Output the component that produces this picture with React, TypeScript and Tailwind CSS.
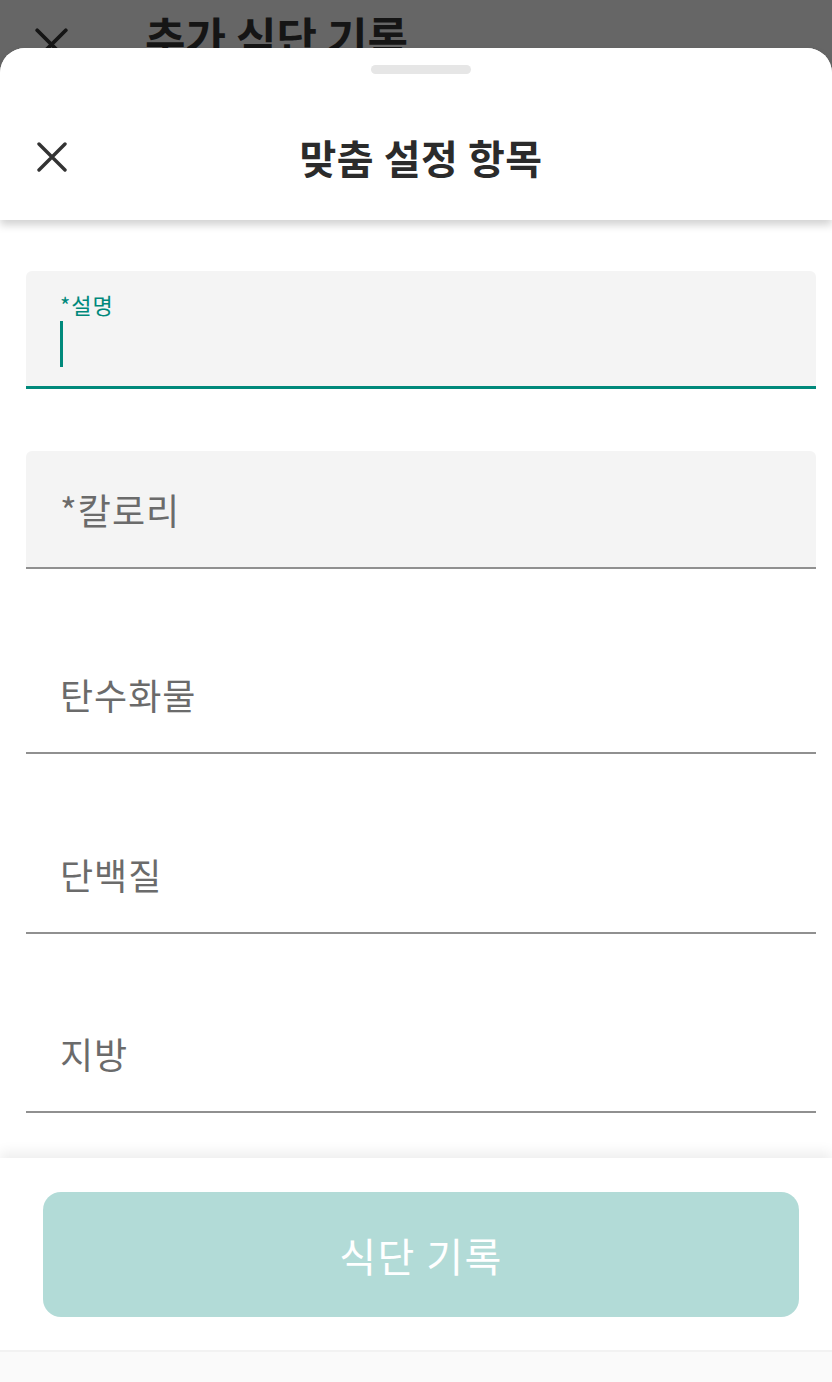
import React from "react";

function XIcon({ className }: { className?: string }) {
  return (
    <svg viewBox="0 0 30 30" className={className} fill="none">
      <path d="M2 2 L28 28 M28 2 L2 28" stroke="currentColor" strokeWidth="3.4" strokeLinecap="round" />
    </svg>
  );
}

function Field({ label, filled }: { label: string; filled?: boolean }) {
  return (
    <div
      className={`h-[118px] flex items-center pl-[34px] border-b-2 border-[#909090] ${
        filled ? "bg-[#f4f4f4] rounded-t-[6px]" : ""
      }`}
    >
      <span className="text-[36px] leading-none text-[#6b6b6b] tracking-[1px]">{label}</span>
    </div>
  );
}

export default function App() {
  return (
    <div
      className="w-[832px] h-[1382px] flex flex-col bg-[#666666] overflow-hidden"
      style={{ fontFamily: '"Noto Sans CJK KR", "Noto Sans", sans-serif' }}
    >
      {/* page behind the overlay */}
      <div className="h-[48px] shrink-0 overflow-hidden relative">
        <div className="flex items-start pt-[14px] pl-[35px]">
          <XIcon className="w-[33px] h-[33px] mt-[14px] text-[#151515]" />
          <span className="ml-[77px] text-[44px] font-bold leading-none text-[#151515]">추가 식단 기록</span>
        </div>
      </div>

      {/* bottom sheet */}
      <div className="flex-1 flex flex-col bg-white rounded-t-[25px]">
        <div className="h-[172px] shrink-0 relative z-10 bg-white rounded-t-[25px] shadow-[0_5px_8px_rgba(0,0,0,0.18)] flex flex-col">
          <div className="mt-[17px] ml-[371px] w-[100px] h-[9px] rounded-full bg-[#e6e6e6]" />
          <div className="flex-1 flex items-center relative pt-[20px]">
            <XIcon className="ml-[37px] w-[30px] h-[30px] text-[#333333]" />
            <div className="absolute inset-0 pt-[20px] flex items-center justify-center pl-[10px]">
              <span className="text-[40px] font-bold leading-none text-[#2b2b2b] tracking-[0.5px]">맞춤 설정 항목</span>
            </div>
          </div>
        </div>

        <div className="flex-1 pl-[26px] pr-[16px] pt-[51px] flex flex-col">
          {/* focused field */}
          <div className="h-[118px] bg-[#f4f4f4] rounded-t-[6px] border-b-[3px] border-[#00897b] pl-[34px] pt-[20px] flex flex-col">
            <span className="text-[22px] leading-[26px] text-[#00897b] tracking-[1px]">*설명</span>
            <div className="mt-[4px] w-[3px] h-[46px] bg-[#00897b]" />
          </div>
          <div className="mt-[62px]">
            <Field label="*칼로리" filled />
          </div>
          <div className="mt-[67px]">
            <Field label="탄수화물" />
          </div>
          <div className="mt-[62px]">
            <Field label="단백질" />
          </div>
          <div className="mt-[61px]">
            <Field label="지방" />
          </div>
        </div>

        <div className="h-[224px] shrink-0 bg-white shadow-[0_-6px_12px_rgba(0,0,0,0.07)] flex flex-col z-10">
          <div className="pt-[34px] pl-[43px] pr-[33px]">
            <div className="h-[125px] rounded-[18px] bg-[#b2dbd7] flex items-center justify-center">
              <span className="text-[40px] leading-none text-white tracking-[1.5px]">식단 기록</span>
            </div>
          </div>
          <div className="mt-[33px] flex-1 border-t-2 border-[#f2f2f2] bg-[#fafafa]" />
        </div>
      </div>
    </div>
  );
}
